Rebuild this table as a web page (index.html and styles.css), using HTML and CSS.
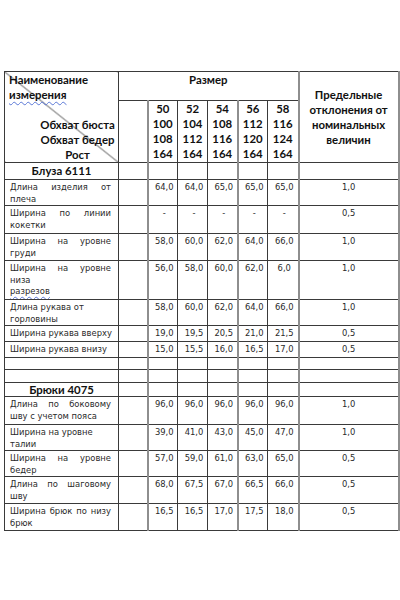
FILE: index.html
```html
<!DOCTYPE html>
<html lang="ru">
<head>
<meta charset="utf-8">
<title>Таблица размеров</title>
<link rel="stylesheet" href="styles.css">
</head>
<body>
<table class="spec">
  <colgroup>
    <col class="c-name"><col class="c-empty">
    <col class="c-sz"><col class="c-sz"><col class="c-sz"><col class="c-sz"><col class="c-sz7">
    <col class="c-tol"><col class="c-extra">
  </colgroup>
  <tr class="h1">
    <th class="corner" rowspan="2">
      <div class="corner-top">Наименование<br><span class="squiggle">измерения</span></div>
      <div class="corner-bottom">Обхват бюста<br>Обхват бедер<br>Рост</div>
    </th>
    <th class="size-title" colspan="6">Размер</th>
    <th class="tol-head gb" rowspan="2">Предельные<br>отклонения от<br>номинальных<br>величин</th>
    <td class="extra gb" rowspan="2"></td>
  </tr>
  <tr class="h2">
    <td></td>
    <th class="sz gb">50<br>100<br>108<br>164</th>
    <th class="sz">52<br>104<br>112<br>164</th>
    <th class="sz">54<br>108<br>116<br>164</th>
    <th class="sz gb">56<br>112<br>120<br>164</th>
    <th class="sz">58<br>116<br>124<br>164</th>
  </tr>

  <tr class="r17 sec"><th>Блуза 6111</th><td></td><td></td><td></td><td></td><td></td><td></td><td></td><td></td></tr>
  <tr class="r26"><td class="lbl">Длина изделия от плеча</td><td></td><td class="n">64,0</td><td class="n">64,0</td><td class="n">65,0</td><td class="n">65,0</td><td class="n">65,0</td><td class="t">1,0</td><td></td></tr>
  <tr class="r28"><td class="lbl">Ширина по линии кокетки</td><td></td><td class="n">-</td><td class="n">-</td><td class="n">-</td><td class="n">-</td><td class="n">-</td><td class="t">0,5</td><td></td></tr>
  <tr class="r27"><td class="lbl">Ширина на уровне груди</td><td></td><td class="n">58,0</td><td class="n">60,0</td><td class="n">62,0</td><td class="n">64,0</td><td class="n">66,0</td><td class="t">1,0</td><td></td></tr>
  <tr class="r39"><td class="lbl"><span class="jline">Ширина на уровне</span><span class="bline">низа</span><span class="bline squiggle">разрезов</span></td><td></td><td class="n">56,0</td><td class="n">58,0</td><td class="n">60,0</td><td class="n">62,0</td><td class="n">6,0</td><td class="t">1,0</td><td></td></tr>
  <tr class="r26"><td class="lbl left">Длина рукава от горловины</td><td></td><td class="n">58,0</td><td class="n">60,0</td><td class="n">62,0</td><td class="n">64,0</td><td class="n">66,0</td><td class="t">1,0</td><td></td></tr>
  <tr class="r16"><td class="lbl left nowrap">Ширина рукава вверху</td><td></td><td class="n">19,0</td><td class="n">19,5</td><td class="n">20,5</td><td class="n">21,0</td><td class="n">21,5</td><td class="t">0,5</td><td></td></tr>
  <tr class="r16"><td class="lbl left nowrap">Ширина рукава внизу</td><td></td><td class="n">15,0</td><td class="n">15,5</td><td class="n">16,0</td><td class="n">16,5</td><td class="n">17,0</td><td class="t">0,5</td><td></td></tr>
  <tr class="r12"><td></td><td></td><td></td><td></td><td></td><td></td><td></td><td></td><td></td></tr>
  <tr class="r13"><td></td><td></td><td></td><td></td><td></td><td></td><td></td><td></td><td></td></tr>
  <tr class="r14 sec"><th>Брюки 4075</th><td></td><td></td><td></td><td></td><td></td><td></td><td></td><td></td></tr>
  <tr class="r28"><td class="lbl">Длина по боковому шву с учетом пояса</td><td></td><td class="n">96,0</td><td class="n">96,0</td><td class="n">96,0</td><td class="n">96,0</td><td class="n">96,0</td><td class="t">1,0</td><td></td></tr>
  <tr class="r26"><td class="lbl left">Ширина на уровне талии</td><td></td><td class="n">39,0</td><td class="n">41,0</td><td class="n">43,0</td><td class="n">45,0</td><td class="n">47,0</td><td class="t">1,0</td><td></td></tr>
  <tr class="r25"><td class="lbl">Ширина на уровне бедер</td><td></td><td class="n">57,0</td><td class="n">59,0</td><td class="n">61,0</td><td class="n">63,0</td><td class="n">65,0</td><td class="t">0,5</td><td></td></tr>
  <tr class="r27"><td class="lbl">Длина по шаговому шву</td><td></td><td class="n">68,0</td><td class="n">67,5</td><td class="n">67,0</td><td class="n">66,5</td><td class="n">66,0</td><td class="t">0,5</td><td></td></tr>
  <tr class="r27"><td class="lbl">Ширина брюк по низу брюк</td><td></td><td class="n">16,5</td><td class="n">16,5</td><td class="n">17,0</td><td class="n">17,5</td><td class="n">18,0</td><td class="t">0,5</td><td></td></tr>
</table>
</body>
</html>
```

FILE: styles.css
```css
html, body {
  margin: 0;
  padding: 0;
  background: #fff;
  overflow: hidden;
}
body {
  padding: 71px 0 0 4px;
  width: 460px;
}
.spec {
  border-collapse: collapse;
  table-layout: fixed;
  width: 424px;
  font-family: "DejaVu Sans", Verdana, sans-serif;
  font-size: 8.4px;
  color: #2a2a2a;
}
.c-name { width: 114px; }
.c-empty { width: 29px; }
.c-sz { width: 30px; }
.c-sz7 { width: 31px; }
.c-tol { width: 100px; }
.c-extra { width: 30px; }

.spec td, .spec th {
  border: 1px solid #3a3a3a;
  padding: 0;
  vertical-align: top;
  line-height: 11.5px;
  overflow: hidden;
}
.spec tr > td:nth-child(3),
.spec tr > td:nth-child(6),
.spec tr > td:nth-child(8),
.spec tr > td:nth-child(9),
.spec .gb {
  border-left: 2px solid #8e8e8e;
}

.spec th {
  font-family: Lato, "Liberation Sans", sans-serif;
  font-weight: bold;
  font-size: 11.4px;
  color: #111;
  line-height: 15px;
}

.h1 { height: 29px; }
.h2 { height: 59px; }
.r12 { height: 12px; }
.r13 { height: 13px; }
.r14 { height: 14px; }
.r16 { height: 16px; }
.r17 { height: 17px; }
.r25 { height: 25px; }
.r26 { height: 26px; }
.r27 { height: 27px; }
.r28 { height: 28px; }
.r39 { height: 39px; }

.spec .corner {
  text-align: left;
  background: linear-gradient(to top right, transparent calc(50% - 0.7px), #3a3a3a 50%, transparent calc(50% + 0.7px));
}
.corner-top {
  padding-left: 4px;
  height: 45px;
}
.corner-bottom {
  text-align: center;
  padding-left: 32px;
}
.squiggle {
  text-decoration: underline wavy #5a78d6;
  text-decoration-thickness: 1px;
  text-underline-offset: 2px;
}

.spec .size-title {
  text-align: center;
}
.spec .sz {
  text-align: center;
}
.spec .tol-head {
  text-align: center;
  vertical-align: middle;
}

.spec .sec th {
  text-align: center;
  vertical-align: middle;
  line-height: 12px;
}

.spec td.lbl {
  padding: 2px 7px 0 5px;
  text-align: justify;
  text-align-last: left;
}
.spec td.lbl.left {
  text-align: left;
}
.spec td.nowrap {
  white-space: nowrap;
  padding-right: 0;
}
.jline {
  display: block;
  text-align: justify;
  text-align-last: justify;
}
.bline {
  display: block;
}
.spec td.n {
  text-align: center;
  padding: 2px 1px 0 4px;
}
.spec td.t {
  text-align: center;
  padding-top: 2px;
}
```
